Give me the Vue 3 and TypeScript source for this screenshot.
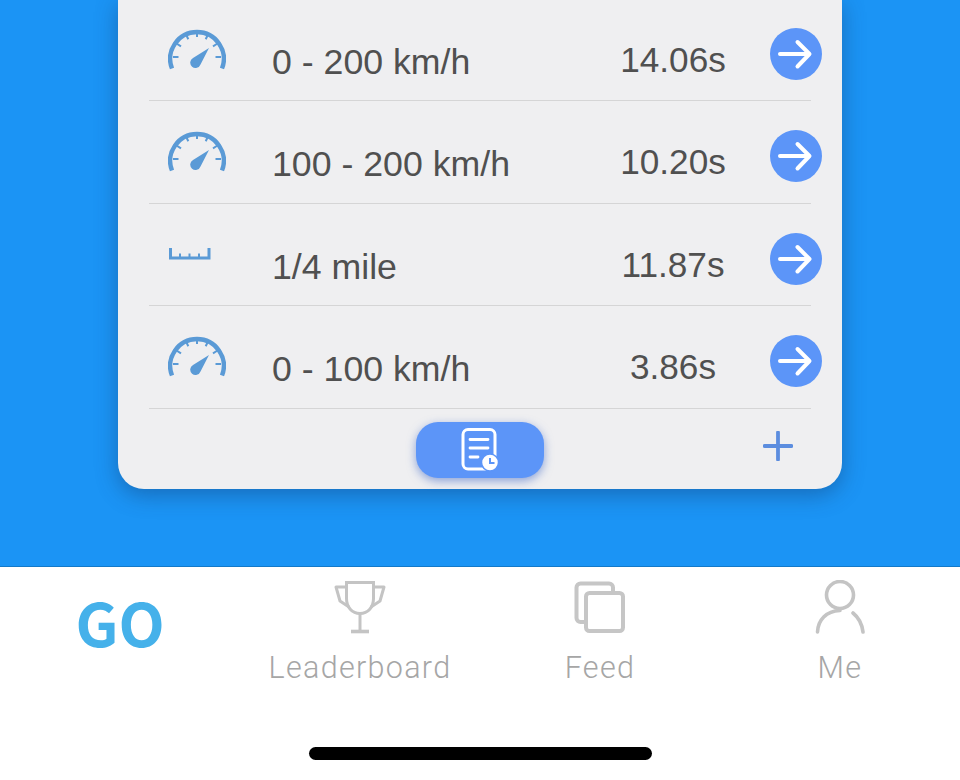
<script setup lang="ts">
type Run = { kind: 'gauge' | 'ruler'; label: string; time: string }

const runs: Run[] = [
  { kind: 'gauge', label: '0 - 200 km/h', time: '14.06s' },
  { kind: 'gauge', label: '100 - 200 km/h', time: '10.20s' },
  { kind: 'ruler', label: '1/4 mile', time: '11.87s' },
  { kind: 'gauge', label: '0 - 100 km/h', time: '3.86s' },
]

const ticks = [
  'M5 29h5.500',
  'M8.500 15.500l4.500 2.800',
  'M18 6.500l2.300 4.800',
  'M29 3.500v5.500',
  'M40 6.500l-2.300 4.800',
  'M49.500 15.500l-4.500 2.800',
  'M53 29h-5.500',
]
</script>

<template>
  <div class="screen">
    <section class="stage">
      <div class="card">
        <div v-for="run in runs" :key="run.label" class="row">
          <span class="row-icon">
            <svg v-if="run.kind === 'gauge'" width="58" height="42" viewBox="0 0 58 42" fill="none">
              <path d="M4 40.500A26.800 26.800 0 1 1 54 40.500" stroke="#5a9ad6" stroke-width="4.400" />
              <path v-for="t in ticks" :key="t" :d="t" stroke="#5a9ad6" stroke-width="2" />
              <path d="M41 20L32.500 36.500A5.300 5.300 0 1 1 25 30Z" fill="#5a9ad6" />
            </svg>
            <svg v-else width="44" height="14" viewBox="0 0 44 14" fill="none" class="ruler">
              <path d="M2.500 0v10h38.500V0" stroke="#5a9ad6" stroke-width="3" />
              <path d="M12 5.500v4M21.500 5.500v4M31 5.500v4" stroke="#5a9ad6" stroke-width="2" />
            </svg>
          </span>
          <span class="row-label">{{ run.label }}</span>
          <span class="row-time">{{ run.time }}</span>
          <span class="row-go">
            <svg width="52" height="52" viewBox="0 0 52 52" fill="none">
              <path d="M10 26h29M27.500 14L39.500 26L27.500 38.500" stroke="#fff" stroke-width="4" stroke-linecap="round" stroke-linejoin="round" />
            </svg>
          </span>
        </div>
        <div class="card-foot">
          <button class="history" type="button">
            <svg width="38" height="44" viewBox="0 0 38 44" fill="none">
              <rect x="2" y="1.500" width="32" height="39.500" rx="5" stroke="#fff" stroke-width="3" />
              <path d="M9 11.500h18M9 20h18M9 29h8" stroke="#fff" stroke-width="2.800" stroke-linecap="round" />
              <circle cx="29" cy="34.500" r="8.500" fill="#fff" stroke="#5c95f8" stroke-width="1.500" />
              <path d="M29 30v5h4.500" stroke="#5c95f8" stroke-width="2" />
            </svg>
          </button>
          <svg class="plus" width="30" height="30" viewBox="0 0 30 30" fill="none">
            <path d="M15 1.500v27M1.500 15h27" stroke="#5c8ddf" stroke-width="3.800" stroke-linecap="round" />
          </svg>
        </div>
      </div>
    </section>

    <nav class="tabs">
      <div class="tab">
        <span class="go">GO</span>
      </div>
      <div class="tab">
        <svg width="52" height="54" viewBox="0 0 52 54" fill="none" stroke="#c4c4c4" stroke-width="3">
          <path d="M12.500 2.500h27v16c0 8.500-5.500 15-13.500 15s-13.500-6.500-13.500-15z" />
          <path d="M12.500 7H2l4 14 9 6M39.500 7H50l-4 14-9 6" stroke-linejoin="round" />
          <path d="M26 33.500v17" />
          <path d="M17 51.500h18" stroke-width="3.600" />
        </svg>
        <span class="tab-label">Leaderboard</span>
      </div>
      <div class="tab">
        <svg width="52" height="52" viewBox="0 0 52 52" fill="none" stroke="#c6c6c6" stroke-width="4">
          <path d="M11 41H6.500a4 4 0 0 1-4-4V6.500a4 4 0 0 1 4-4H35a4 4 0 0 1 4 4V12" />
          <rect x="12" y="12" width="37" height="38" rx="3.500" />
        </svg>
        <span class="tab-label">Feed</span>
      </div>
      <div class="tab">
        <svg width="52" height="54" viewBox="0 0 52 54" fill="none" stroke="#c4c4c4" stroke-width="3.600" stroke-linecap="round">
          <circle cx="26" cy="15" r="13.500" />
          <path d="M3.500 52C4 40 12 31 26 30.500M39 33C44 37 48 44 49 52" />
        </svg>
        <span class="tab-label">Me</span>
      </div>
      <div class="home-bar"></div>
    </nav>
  </div>
</template>

<style>
html, body { margin: 0; background: #fff; }
</style>

<style scoped>
.screen {
  width: 960px;
  height: 780px;
  display: flex;
  flex-direction: column;
  overflow: hidden;
  font-family: "Liberation Sans", Arial, sans-serif;
}
.stage {
  height: 567px;
  flex: none;
  box-sizing: border-box;
  padding: 0 118px 77px;
  display: flex;
  flex-direction: column;
  justify-content: flex-end;
  background: #1b94f5;
  border-bottom: 1px solid #1479c8;
  overflow: hidden;
}
.card {
  flex: none;
  box-sizing: border-box;
  padding: 0 31px;
  background: #efeff1;
  border-radius: 0 0 26px 26px;
  box-shadow: 0 6px 22px rgba(20, 60, 110, 0.45);
}
.row {
  display: flex;
  align-items: flex-start;
  height: 102.500px;
  box-sizing: border-box;
  border-bottom: 1.500px solid #d5d5d6;
  color: #505050;
  font-size: 35.200px;
  line-height: 40px;
}
.row-icon {
  width: 58px;
  height: 42px;
  margin: 29px 0 0 19px;
  flex: none;
}
.row-icon svg { display: block; }
.row-icon .ruler { margin: 15px 0 0 0; }
.row-label {
  flex: 1;
  margin: 43px 0 0 46px;
  font-size: 35.700px;
}
.row-time {
  width: 120px;
  flex: none;
  margin-top: 41px;
  text-align: center;
}
.row-go {
  width: 52px;
  height: 52px;
  flex: none;
  margin: 29px -11px 0 37px;
  border-radius: 50%;
  background: #5c95f8;
}
.row-go svg { display: block; }
.card-foot {
  position: relative;
  height: 80.500px;
  display: flex;
  justify-content: center;
  align-items: flex-start;
}
.history {
  width: 128px;
  height: 56px;
  margin-top: 13px;
  padding: 0;
  border: 0;
  border-radius: 22px;
  background: #5c95f8;
  box-shadow: 0 3px 10px rgba(70, 110, 200, 0.6);
  display: flex;
  align-items: center;
  justify-content: center;
}
.plus {
  position: absolute;
  right: 18px;
  top: 22px;
}
.tabs {
  position: relative;
  flex: 1;
  display: grid;
  grid-template-columns: repeat(4, 1fr);
  align-items: start;
  background: #fff;
}
.tab {
  display: flex;
  flex-direction: column;
  align-items: center;
  padding-top: 13px;
}
.tab svg { display: block; height: 54px; }
.tab-label {
  margin-top: 17px;
  color: #a6a6a6;
  font-family: Roboto, "Liberation Sans", sans-serif;
  font-size: 30.500px;
  font-weight: 300;
  line-height: 34px;
  letter-spacing: 1.300px;
}
.go {
  margin-top: 6px;
  color: #45b1ea;
  font-family: "Noto Sans CJK SC", "Noto Sans", sans-serif;
  font-weight: 700;
  font-size: 60px;
  line-height: 70px;
}
.home-bar {
  position: absolute;
  left: 309px;
  top: 180px;
  width: 343px;
  height: 13px;
  border-radius: 7px;
  background: #000;
}
</style>
